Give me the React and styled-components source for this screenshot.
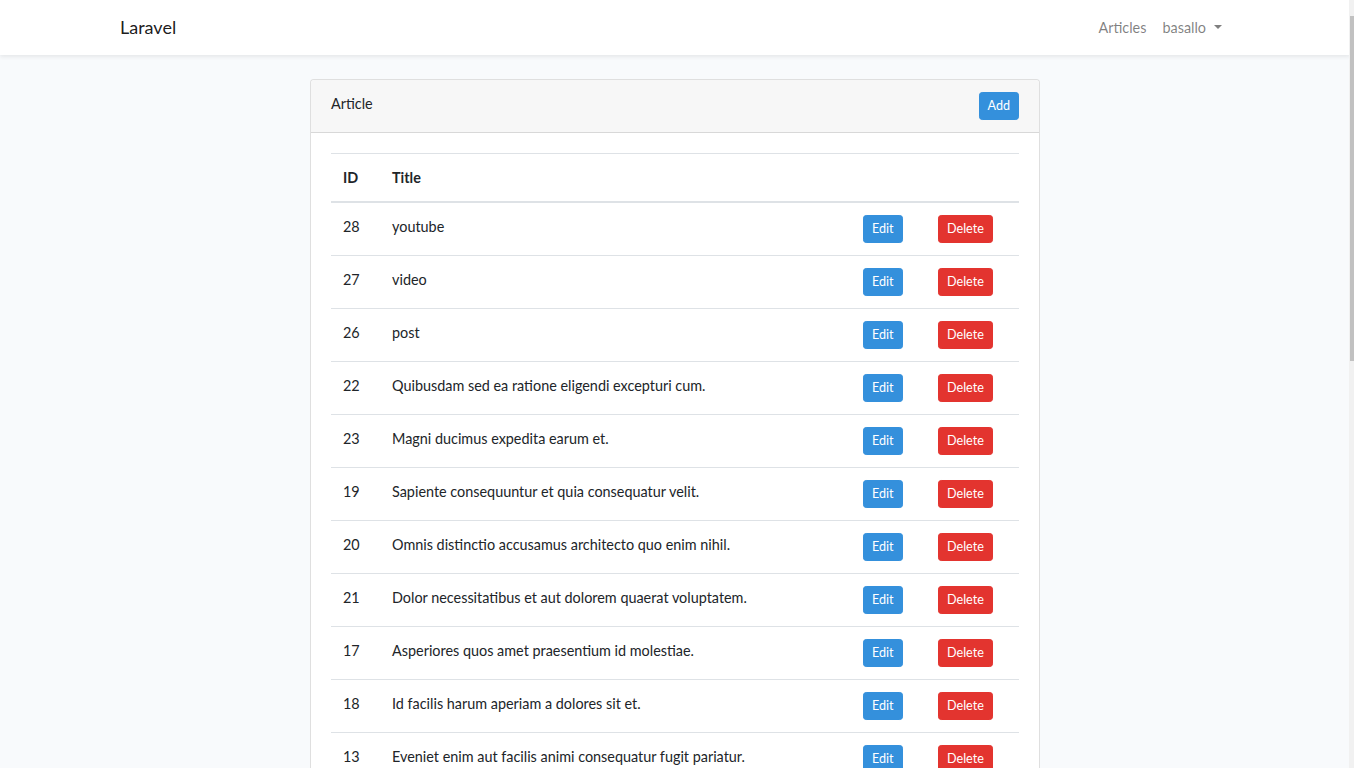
import React from 'react';
import styled, {createGlobalStyle} from 'styled-components';

const GlobalStyle = createGlobalStyle`
    *, *::before, *::after {
        box-sizing: border-box;
    }
    html, body {
        margin: 0;
        padding: 0;
    }
    body {
        background: #f8fafc;
        font-family: Lato, "Liberation Sans", sans-serif;
        font-size: 14.4px;
        line-height: 1.6;
        color: #212529;
    }
`;

const Page = styled.div`
    width: calc(100% - 4px);
`;

// fake window scrollbar, drawn over the right edge like the screenshot
const ScrollTrack = styled.div`
    position: fixed;
    top: 0;
    right: 0;
    width: 5px;
    height: 100vh;
    background: #f1f1f1;
`;

const ScrollThumb = styled.div`
    position: absolute;
    top: 16px;
    right: 0;
    width: 4px;
    height: 345px;
    background: #c1c1c1;
`;

const Navbar = styled.nav`
    background: #fff;
    box-shadow: 0 2px 4px rgba(0, 0, 0, 0.075);
    padding: 8px 0;
`;

const Container = styled.div`
    width: 1140px;
    margin: 0 auto;
    padding: 0 15px;
    display: flex;
    align-items: center;
    justify-content: ${props => props.center ? 'center' : 'space-between'};
`;

const Brand = styled.a`
    font-size: 18px;
    line-height: 28.8px;
    padding: 5px 0;
    color: rgba(0, 0, 0, 0.9);
    text-decoration: none;
`;

const NavLinks = styled.div`
    display: flex;
    align-items: center;
`;

const NavLink = styled.a`
    padding: 8px;
    color: rgba(0, 0, 0, 0.5);
    text-decoration: none;
    display: flex;
    align-items: center;
`;

const Caret = styled.span`
    display: inline-block;
    margin-left: 8px;
    width: 0;
    height: 0;
    border-top: 4.5px solid rgba(0, 0, 0, 0.5);
    border-left: 4.5px solid transparent;
    border-right: 4.5px solid transparent;
    margin-top: -2px;
`;

const Main = styled.main`
    padding: 24px 0;
`;

const Card = styled.div`
    width: 730px;
    background: #fff;
    border: 1px solid rgba(0, 0, 0, 0.125);
    border-radius: 4px;
`;

const CardHeader = styled.div`
    padding: 12px 20px;
    background: #f7f7f7;
    border-bottom: 1px solid rgba(0, 0, 0, 0.125);
    border-radius: 4px 4px 0 0;
    display: flex;
    justify-content: space-between;
    align-items: flex-start;
`;

const CardBody = styled.div`
    padding: 20px;
`;

const Table = styled.table`
    width: 100%;
    table-layout: fixed;
    border-collapse: collapse;
    margin-bottom: 16px;
`;

const Th = styled.th`
    text-align: left;
    padding: 12px;
    font-weight: 700;
    border-top: 1px solid #dee2e6;
    border-bottom: 2px solid #dee2e6;
    vertical-align: bottom;
    width: ${props => props.w ? props.w + 'px' : 'auto'};
`;

const Td = styled.td`
    padding: 12px;
    border-top: 1px solid #dee2e6;
    vertical-align: top;
    line-height: 23px;
`;

const Button = styled.button`
    font-family: inherit;
    font-size: 12.6px;
    line-height: 18px;
    height: 28px;
    padding: 4px 8px;
    border-radius: 3.2px;
    border: 1px solid ${props => props.danger ? '#e3342f' : '#3490dc'};
    background: ${props => props.danger ? '#e3342f' : '#3490dc'};
    color: #fff;
    cursor: pointer;
    display: block;
`;

const articles = [
    [28, 'youtube'],
    [27, 'video'],
    [26, 'post'],
    [22, 'Quibusdam sed ea ratione eligendi excepturi cum.'],
    [23, 'Magni ducimus expedita earum et.'],
    [19, 'Sapiente consequuntur et quia consequatur velit.'],
    [20, 'Omnis distinctio accusamus architecto quo enim nihil.'],
    [21, 'Dolor necessitatibus et aut dolorem quaerat voluptatem.'],
    [17, 'Asperiores quos amet praesentium id molestiae.'],
    [18, 'Id facilis harum aperiam a dolores sit et.'],
    [13, 'Eveniet enim aut facilis animi consequatur fugit pariatur.'],
];

function App() {
    return (
        <Page>
            <GlobalStyle/>
            <Navbar>
                <Container>
                    <Brand href="#">Laravel</Brand>
                    <NavLinks>
                        <NavLink href="#">Articles</NavLink>
                        <NavLink href="#">basallo<Caret/></NavLink>
                    </NavLinks>
                </Container>
            </Navbar>
            <Main>
                <Container center>
                    <Card>
                        <CardHeader>
                            <span>Article</span>
                            <Button>Add</Button>
                        </CardHeader>
                        <CardBody>
                            <Table>
                                <thead>
                                    <tr>
                                        <Th w={49}>ID</Th>
                                        <Th>Title</Th>
                                        <Th w={75}></Th>
                                        <Th w={93}></Th>
                                    </tr>
                                </thead>
                                <tbody>
                                    {articles.map(a => (
                                        <tr key={a[0]}>
                                            <Td>{a[0]}</Td>
                                            <Td>{a[1]}</Td>
                                            <Td><Button>Edit</Button></Td>
                                            <Td><Button danger>Delete</Button></Td>
                                        </tr>
                                    ))}
                                </tbody>
                            </Table>
                        </CardBody>
                    </Card>
                </Container>
            </Main>
            <ScrollTrack><ScrollThumb/></ScrollTrack>
        </Page>
    );
}

export default App;
